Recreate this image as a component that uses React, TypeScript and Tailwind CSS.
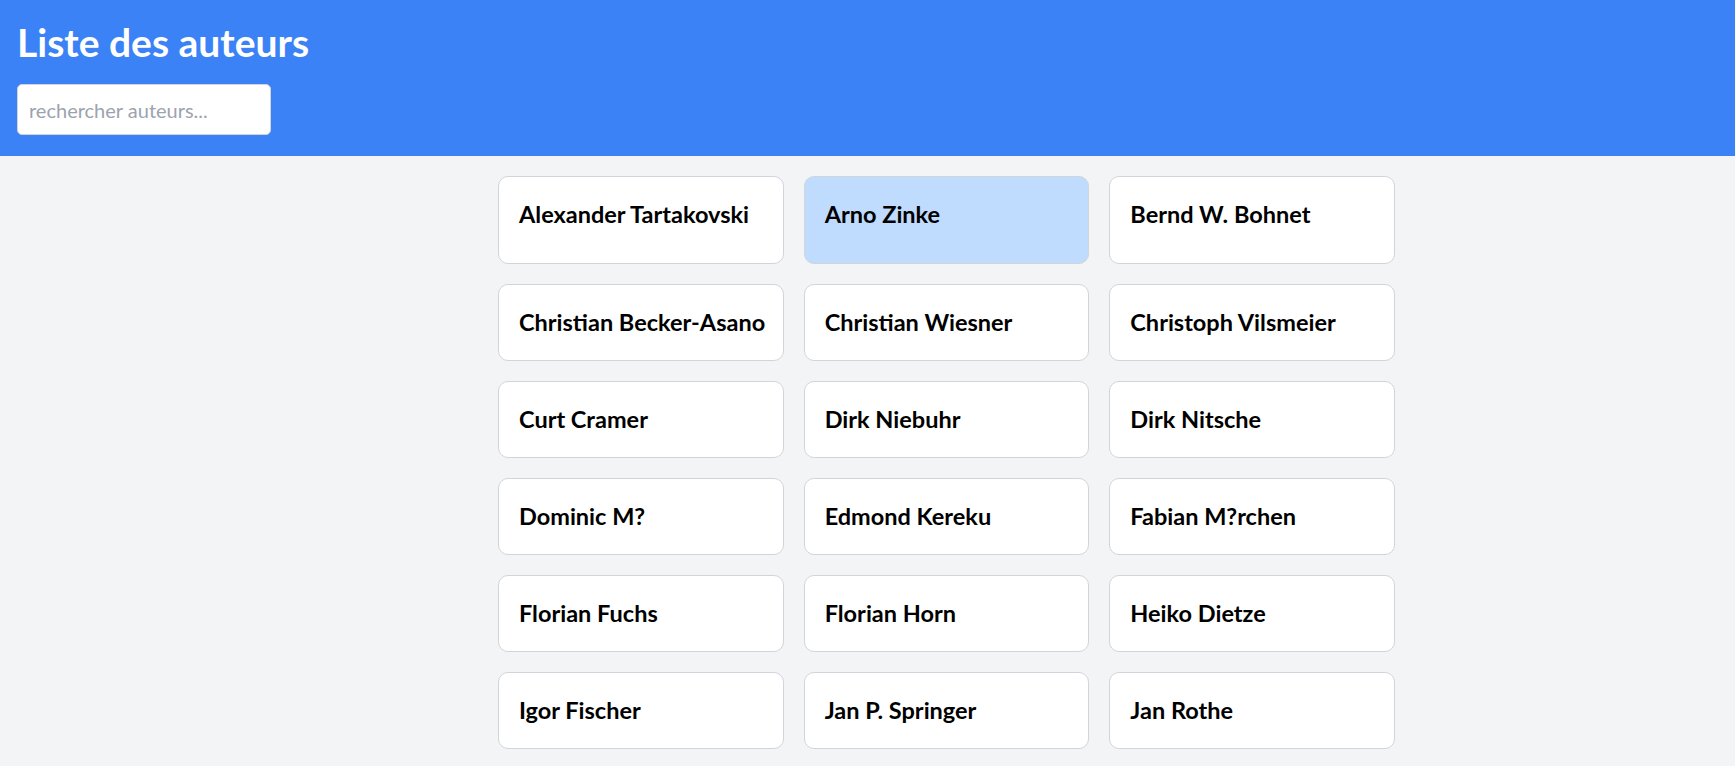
import React, { useState } from 'react';

const authors = [
  'Alexander Tartakovski',
  'Arno Zinke',
  'Bernd W. Bohnet',
  'Christian Becker-Asano',
  'Christian Wiesner',
  'Christoph Vilsmeier',
  'Curt Cramer',
  'Dirk Niebuhr',
  'Dirk Nitsche',
  'Dominic M?',
  'Edmond Kereku',
  'Fabian M?rchen',
  'Florian Fuchs',
  'Florian Horn',
  'Heiko Dietze',
  'Igor Fischer',
  'Jan P. Springer',
  'Jan Rothe',
];

const App: React.FC = () => {
  const [query, setQuery] = useState('');
  const [selected, setSelected] = useState('Arno Zinke');

  const list = authors.filter((a) => a.toLowerCase().includes(query.toLowerCase()));

  return (
    <div className="min-h-screen bg-[#f3f4f6] font-['Lato',sans-serif]">
      <header className="bg-[#3b82f6] px-[17px] pt-5 pb-[21px]">
        <h1 className="text-[39px] leading-[45px] font-bold text-white">Liste des auteurs</h1>
        <input
          type="text"
          value={query}
          onChange={(e) => setQuery(e.target.value)}
          placeholder="rechercher auteurs..."
          className="mt-[19px] block h-[51px] w-[254px] rounded-[5px] border border-[#d1d5db] bg-white px-[11px] text-[20px] text-gray-900 placeholder:text-[#9ca3af] outline-none"
        />
      </header>

      <main className="pl-[158px] pt-5 pb-5">
        <div className="mx-auto grid w-[897px] grid-cols-3 gap-5">
          {list.map((name, i) => (
            <button
              key={name}
              onClick={() => setSelected(name)}
              className={`flex items-start whitespace-nowrap rounded-[10px] border border-[#d1d5db] px-5 pt-5 text-left text-[23.5px] leading-[35px] font-bold text-black ${
                i < 3 ? 'h-[88px]' : 'h-[77px]'
              } ${selected === name ? 'bg-[#bfdbfe]' : 'bg-white'}`}
            >
              {name}
            </button>
          ))}
        </div>
      </main>
    </div>
  );
};

export default App;
